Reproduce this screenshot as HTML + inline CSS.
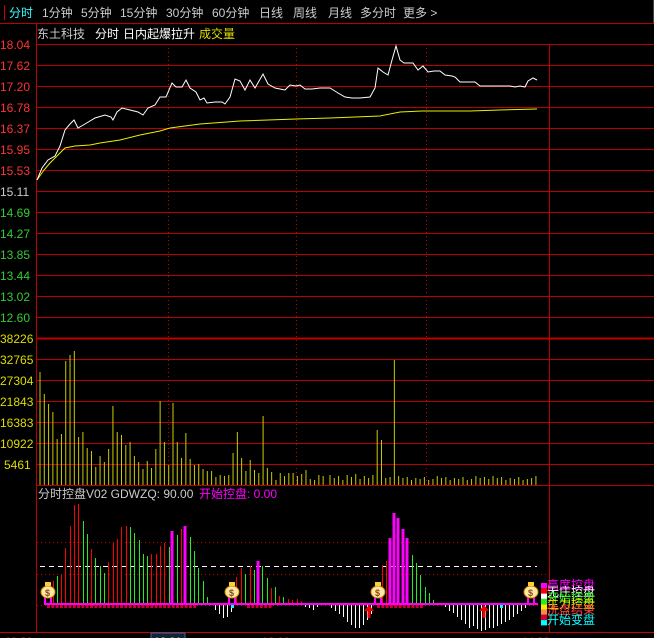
<!DOCTYPE html>
<html><head><meta charset="utf-8"><style>
html,body{margin:0;padding:0;background:#000;width:654px;height:638px;overflow:hidden}
svg{display:block}
text{font-family:"Liberation Sans","Noto Sans CJK SC",sans-serif}
</style></head><body>
<svg id="s" width="654" height="638" xmlns="http://www.w3.org/2000/svg">
<rect width="654" height="638" fill="#000"/>
<line x1="0" y1="23.5" x2="654" y2="23.5" stroke="#b00" stroke-width="1"/>
<line x1="654" y1="0" x2="654" y2="23" stroke="#888"/>
<rect x="4" y="5" width="1" height="15" fill="#c00"/>
<g font-size="12" fill="#ccc">
<text x="9" y="17" fill="#3ff">分时</text>
<text x="42" y="17">1分钟</text><text x="81" y="17">5分钟</text><text x="120" y="17">15分钟</text>
<text x="166" y="17">30分钟</text><text x="212" y="17">60分钟</text><text x="259" y="17">日线</text>
<text x="293" y="17">周线</text><text x="328" y="17">月线</text><text x="360" y="17">多分时</text><text x="403" y="17">更多 &gt;</text>
</g>
<g font-size="12">
<text x="37" y="38" fill="#ccc">东土科技</text>
<text x="95" y="38" fill="#fff">分时</text>
<text x="123" y="38" fill="#fff">日内起爆拉升</text>
<text x="199" y="38" fill="#dd0">成交量</text>
</g>
<g id="grid"></g>
<g id="labels" font-size="12"></g>
<polyline fill="none" stroke="#ee0" stroke-width="1" points="37,180 44,170 50,163 58,155 65,148 75,146 90,145 100,143 120,140 140,135 160,131 170,128 200,124 240,121 296,119 330,118 380,116 400,112 422,111 470,111 500,110 537,109"/>
<polyline fill="none" stroke="#fff" stroke-width="1" points="37,180 42,168 48,160 55,156 60,146 65,130 70,124 74,120 78,128 85,124 95,118 105,115 111,117 113,120 117,112 122,108 130,110 138,112 143,115 148,108 155,105 160,97 166,97 172,83 176,87 182,87 186,80 190,88 196,92 200,100 204,98 207,103 215,102 222,102 225,104 230,97 235,79 240,81 245,90 250,80 255,88 263,74 268,84 275,88 285,90 290,85 296,86 300,85 305,89 312,89 320,88 330,88 338,93 345,97 352,98 360,98 370,97 375,88 378,68 383,72 388,75 392,60 396,46 400,60 404,63 408,63 413,63 418,70 423,66 428,72 434,71 440,71 445,75 452,76 455,77 460,82 470,82 475,82 480,86 490,86 500,86 510,86 515,87 520,86 525,87 528,81 533,78 537,80"/>
<g id="vol"></g>
<text x="38" y="498" font-size="12" fill="#ccc">分时控盘V02  GDWZQ: 90.00</text>
<text x="199" y="498" font-size="12" fill="#f0f">开始控盘: 0.00</text>
<g id="ind"></g>
<g id="leg" font-size="12"></g>
<line x1="0" y1="632.5" x2="654" y2="632.5" stroke="#c00"/>
<rect x="151" y="633" width="34" height="6" fill="#123" stroke="#46a"/>
<g font-size="11" fill="#e33"><text x="5" y="645">09:30</text><text x="154" y="645" fill="#fff">10:01</text><text x="262" y="645">13:00</text><text x="522" y="645">14:00</text></g>
</svg>
<script>
const NS="http://www.w3.org/2000/svg";
function el(p,t,a,txt){const e=document.createElementNS(NS,t);for(const k in a)e.setAttribute(k,a[k]);if(txt)e.textContent=txt;document.getElementById(p).appendChild(e);return e;}
for(let i=0;i<=21;i++){const y=44+i*21+0.5;el('grid','line',{x1:36,y1:y,x2:654,y2:y,stroke:'#b00','stroke-width':(i==14?2:1)});}
el('grid','line',{x1:36.5,y1:23,x2:36.5,y2:632,stroke:'#b00'});
el('grid','line',{x1:549.5,y1:44,x2:549.5,y2:632,stroke:'#b00'});
[168,296,426].forEach(x=>el('grid','line',{x1:x+.5,y1:44,x2:x+.5,y2:485,stroke:'#c00','stroke-dasharray':'1,3'}));
[542,574,605].forEach(y=>el('grid','line',{x1:37,y1:y+.5,x2:549,y2:y+.5,stroke:'#c00','stroke-dasharray':'1,3'}));
el('grid','line',{x1:40,y1:566.5,x2:537,y2:566.5,stroke:'#fff','stroke-dasharray':'5,4'});
const pl=["18.04","17.62","17.20","16.78","16.37","15.95","15.53","15.11","14.69","14.27","13.85","13.44","13.02","12.60"];
pl.forEach((t,i)=>el('labels','text',{x:0,y:44+i*21+5,fill:i<7?'#f33':(i==7?'#ccc':'#3c3'),'font-size':12},t));
["38226","32765","27304","21843","16383","10922","5461"].forEach((t,i)=>el('labels','text',{x:i==6?4:0,y:338+i*21+5,fill:'#dd0','font-size':12},t));
const v=[372,394,404,412,439,434,361,355,351,437,432,448,451,467,456,462,449,406,432,435,445,442,456,462,469,461,468,449,401,442,465,403,442,458,433,459,465,464,469,471,471,477,475,476,475,453,432,458,471,460,470,473,416,468,472,480,473,476,473,473,476,474,470,479,480,475,476];
v.forEach((y,i)=>{const x=40+i*4.29;el('vol','line',{x1:x,y1:y,x2:x,y2:485,stroke:'#cc0','stroke-width':1});});
const sm=[475,478,476,480,475,477,474,479,476,478,475,472,476,478,477,479,476,478,477,480,478,479,477,480,479,476,478,477,480,478,479,477,480,479,476,478,477,479,476,478,477,480,478,479,477,480,479,478,476];
for(let i=0,x=330;x<=538;x+=4.29,i++){let y=sm[i%sm.length];
 if(Math.abs(x-379)<2.2)y=430;else if(Math.abs(x-383.5)<2.2)y=440;else if(Math.abs(x-396)<2.2)y=360;
 el('vol','line',{x1:x,y1:y,x2:x,y2:485,stroke:'#cc0','stroke-width':1});}
const B=605;
const bars=[[53,'r',581],[57,'g',576],[61,'r',575],[65,'r',548],[70,'r',526],[74,'r',505],[78,'r',504],[83,'g',521],[87,'g',534],[91,'r',549],[95,'g',558],[100,'g',566],[104,'g',573],[108,'r',562],[113,'r',543],[117,'r',539],[121,'r',527],[126,'r',526],[130,'g',527],[134,'g',533],[139,'g',540],[143,'g',554],[147,'g',556],[151,'r',554],[156,'r',554],[160,'r',546],[164,'r',543],[169,'g',547],[172,'m',531],[177,'g',535],[181,'r',529],[185,'m',526],[190,'g',537],[194,'g',551],[198,'g',568],[203,'g',581],[207,'g',597],[236,'r',577],[241,'r',568],[245,'g',574],[250,'r',566],[254,'g',570],[258,'m',561],[262,'g',566],[267,'g',578],[271,'r',588],[275,'g',587],[279,'r',596],[283,'g',597],[288,'r',599],[292,'r',600],[297,'r',599],[301,'r',601],[382,'r',565],[386,'r',561],[390,'m',538],[394,'m',513],[398,'m',518],[403,'m',529],[407,'m',538],[412,'g',555],[416,'g',563],[420,'g',575],[425,'g',587],[429,'g',593],[433,'g',600]];
const col={r:'#f00',g:'#2e2',m:'#f0f'};
bars.forEach(([x,c,y])=>{el('ind','rect',{x:c=='m'?x-1.5:x,y:y,width:c=='m'?3:1,height:B-y,fill:col[c]});});
const neg=[[215,610],[219,614],[223,618],[227,617],[231,612],[305,607],[309,608],[313,610],[317,607],[331,608],[335,611],[339,614],[343,617],[347,622],[351,625],[355,628],[359,628],[363,625],[367,620],[371,614],[445,607],[449,611],[453,613],[457,617],[461,620],[465,624],[469,628],[473,626],[477,629],[481,631],[485,630],[489,628],[493,628],[497,626],[501,624],[505,622],[509,620],[513,617],[517,614],[521,611],[525,608]];
neg.forEach(([x,y])=>el('ind','rect',{x:x,y:B,width:1,height:y-B,fill:'#fff'}));
el('ind','rect',{x:44,y:603,width:494,height:2,fill:'#f0f'});
for(let x=47;x<194;x+=4.3)el('ind','rect',{x:x,y:605,width:3,height:3,fill:'#c03'});
for(let x=247;x<270;x+=4.3)el('ind','rect',{x:x,y:605,width:3,height:3,fill:'#c03'});
for(let x=377;x<422;x+=4.3)el('ind','rect',{x:x,y:605,width:3,height:3,fill:'#c03'});
el('ind','rect',{x:231,y:605,width:3,height:3,fill:'#0ff'});el('ind','rect',{x:500,y:605,width:3,height:3,fill:'#0ff'});
[369,484].forEach(x=>{el('ind','polygon',{points:`${x},605 ${x-5},611 ${x-1.5},611 ${x-1.5},618 ${x+1.5},618 ${x+1.5},611 ${x+5},611`,fill:'#e00'});});
[48,232,378,531].forEach(x=>{
 el('ind','rect',{x:x-4,y:597,width:2,height:8,fill:'#f0f'});el('ind','rect',{x:x+2,y:597,width:2,height:8,fill:'#f0f'});
 el('ind','ellipse',{cx:x,cy:592,rx:7,ry:6,fill:'#ffe9a0',stroke:'#c80'});
 el('ind','rect',{x:x-3,y:582,width:6,height:4,fill:'#fc3'});
 el('ind','text',{x:x-3,y:596,'font-size':9,fill:'#842','font-weight':'bold'},'$');
});
const lc=['#f0f','#f00','#fff','#2e2','#ee0','#f84','#c03','#0ff'];
lc.forEach((c,i)=>el('leg','rect',{x:541,y:583+i*5.3,width:6,height:5.3,fill:c}));
const lt=[['高度控盘','#f0f',589],['无庄控盘','#fff',596],['开始控盘','#2e2',602],['主力控盘','#ee0',608],['洗盘结束','#f44',614],['开始变盘','#0ff',624]];
lt.forEach(([t,c,y])=>el('leg','text',{x:547,y:y,fill:c,'font-size':12},t));
</script>
</body></html>
